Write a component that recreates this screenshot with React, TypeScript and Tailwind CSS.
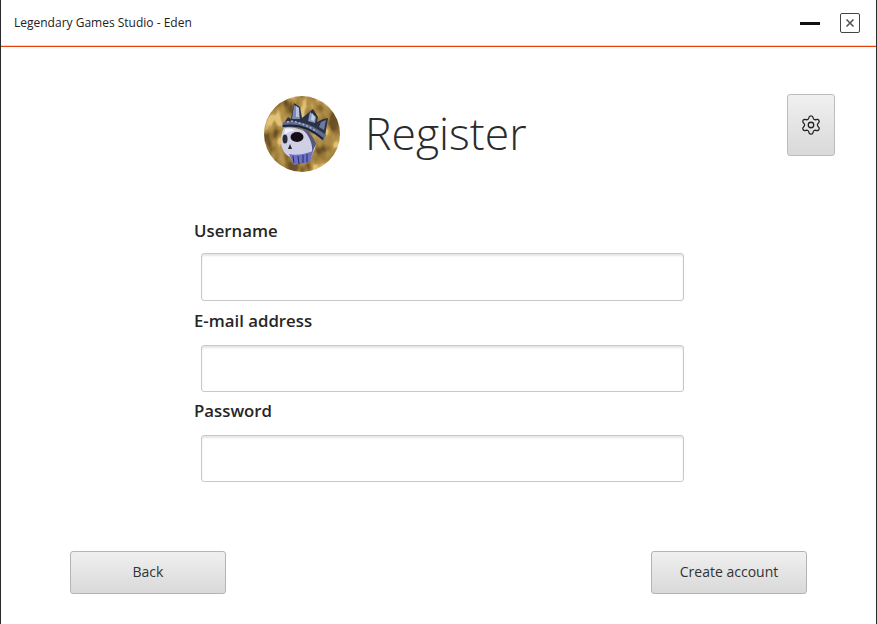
import React from 'react';
import { Settings } from 'lucide-react';

const font = "font-['Open_Sans','Noto_Sans',sans-serif]";

const Avatar = () => (
  <svg width="78" height="78" viewBox="0 0 78 78" className="mt-px shrink-0">
    <defs>
      <filter id="soft" x="-5%" y="-5%" width="110%" height="110%"><feGaussianBlur stdDeviation="0.4" /></filter>
      <filter id="gold" x="0" y="0" width="100%" height="100%" colorInterpolationFilters="sRGB">
        <feTurbulence type="fractalNoise" baseFrequency="0.09 0.06" numOctaves="2" seed="11" />
        <feColorMatrix values="2.4 0 0 0 -0.7  2.4 0 0 0 -0.7  2.4 0 0 0 -0.7  0 0 0 0 1" />
        <feComponentTransfer>
          <feFuncR type="table" tableValues="0.42 0.56 0.66 0.72 0.88" />
          <feFuncG type="table" tableValues="0.32 0.44 0.53 0.58 0.76" />
          <feFuncB type="table" tableValues="0.14 0.2 0.26 0.3 0.46" />
        </feComponentTransfer>
      </filter>
      <clipPath id="disc"><circle cx="39" cy="39" r="38" /></clipPath>
    </defs>
    <g clipPath="url(#disc)">
      <rect width="78" height="78" filter="url(#gold)" />
      <g filter="url(#soft)">
        {/* crown */}
        <path d="M21 28 L25 22 L28 24 L31 8 L37 12 L39 23 L44 19 L50 14 L55 22 L54 27 L60 24 L65 23 L62 41 L50 35 L36 30Z" fill="#2c3146" />
        <path d="M31 10 L36 13 L37 24 L29 24Z" fill="#7f8ab0" />
        <path d="M33 11 L36 13 L36 22 L33 22Z" fill="#b9c1de" />
        <path d="M47 17 L53 22 L52 28 L45 26Z" fill="#8f9bbd" />
        <path d="M49 18 L52 22 L51 26 L48 25Z" fill="#c4cbe4" />
        <path d="M58 27 L63 25 L61 35 L56 32Z" fill="#6f7a9e" />
        <path d="M20 27 C32 24 50 29 63 40 L60 46 C50 36 34 31 19 32Z" fill="#5e6a8c" />
        <path d="M24 27 L30 26 L36 28 L42 30 L48 33 L54 37" stroke="#b3bdd8" strokeWidth="1.4" strokeDasharray="2 2" fill="none" />
        <path d="M20 31 C34 29 48 33 60 44" stroke="#1c2030" strokeWidth="1.8" fill="none" />
        {/* skull */}
        <path d="M21 33 C31 31 44 35 51 45 C54 50 52 55 50 57 L47 66 L31 69 L27 62 C22 60 18 54 18 46 C18 40 19 36 21 33Z" fill="#cfd0e6" />
        <path d="M40 34 C46 37 51 42 53 49 L49 58 C50 50 47 42 40 34Z" fill="#54587e" />
        <path d="M22 34 C27 33 30 34 32 36 C26 36 23 38 21 42Z" fill="#f0f0f8" />
        <path d="M26 59 C33 61 42 59 50 56 L47 67 L31 70Z" fill="#6d70c8" />
        <path d="M30 61 L31 68 M35 61 L36 69 M40 60 L40 68 M44 59 L44 67" stroke="#23254e" strokeWidth="0.9" />
        <ellipse cx="34" cy="42" rx="6.5" ry="5" fill="#121118" />
        <ellipse cx="22" cy="44" rx="2.5" ry="4.5" fill="#2b2a3a" />
        <path d="M27 49 L29 54 L25 54Z" fill="#24232f" />
      </g>
    </g>
  </svg>
);

const Field = ({ label, className, inputClass }: { label: string; className?: string; inputClass: string }) => (
  <div className={`flex flex-col ${className ?? ''}`}>
    <label className="h-[22px] text-[16.8px] leading-[22px] font-semibold text-[#262626]">{label}</label>
    <input
      type="text"
      className={`ml-[7px] w-[483px] rounded-[3px] border border-[#c8c8c8] bg-white shadow-[inset_0_2px_2px_rgba(0,0,0,0.1)] outline-none ${inputClass}`}
    />
  </div>
);

const GreyButton = ({ children }: { children: React.ReactNode }) => (
  <button className="h-[43px] w-[156px] rounded-[3px] border border-[#b4b4b4] bg-gradient-to-b from-[#f0f0f0] to-[#d9d9d9] pb-0.5 text-[14px] text-[#333333]">
    {children}
  </button>
);

export default function App() {
  return (
    <div className={`flex h-[624px] w-[877px] flex-col border-x border-[#2a2a2a] bg-white ${font}`}>
      {/* Title bar */}
      <header className="flex h-[47px] shrink-0 items-center justify-between border-b border-[#e8400a] pl-[13px] pr-[16px] shadow-[inset_0_-1px_0_#f8d3c4]">
        <span className="text-xs text-[#222222]">Legendary Games Studio - Eden</span>
        <div className="flex items-center gap-5">
          <span className="block h-[3px] w-5 bg-[#111111]" />
          <span className="flex h-5 w-5 items-center justify-center rounded-[2px] border-[1.5px] border-[#444444]">
            <svg width="12" height="12" viewBox="0 0 12 12">
              <path d="M2.5 2.5 L9.5 9.5 M9.5 2.5 L2.5 9.5" stroke="#555555" strokeWidth="1.6" />
            </svg>
          </span>
        </div>
      </header>

      {/* Heading row */}
      <div className="mt-[47px] flex items-start pl-[262px] pr-[41px]">
        <div className="flex items-center gap-6">
          <Avatar />
          <h1 className="text-[44.5px] leading-none font-light text-[#2b2b2b]">Register</h1>
        </div>
        <button className="ml-auto flex h-[62px] w-[48px] items-center justify-center rounded-[3px] border border-[#bcbcbc] bg-gradient-to-b from-[#f0f0f0] to-[#d9d9d9]">
          <Settings size={22} strokeWidth={1.4} className="text-[#222222]" />
        </button>
      </div>

      {/* Form */}
      <div className="mt-[47px] flex flex-col pl-[193px]">
        <Field label="Username" inputClass="mt-[11px] h-[48px]" />
        <Field label="E-mail address" className="mt-[9px]" inputClass="mt-[13px] h-[47px]" />
        <Field label="Password" className="mt-[8px]" inputClass="mt-[13px] h-[47px]" />
      </div>

      {/* Footer buttons */}
      <div className="mt-[69px] flex justify-between px-[69px]">
        <GreyButton>Back</GreyButton>
        <GreyButton>Create account</GreyButton>
      </div>
    </div>
  );
}
